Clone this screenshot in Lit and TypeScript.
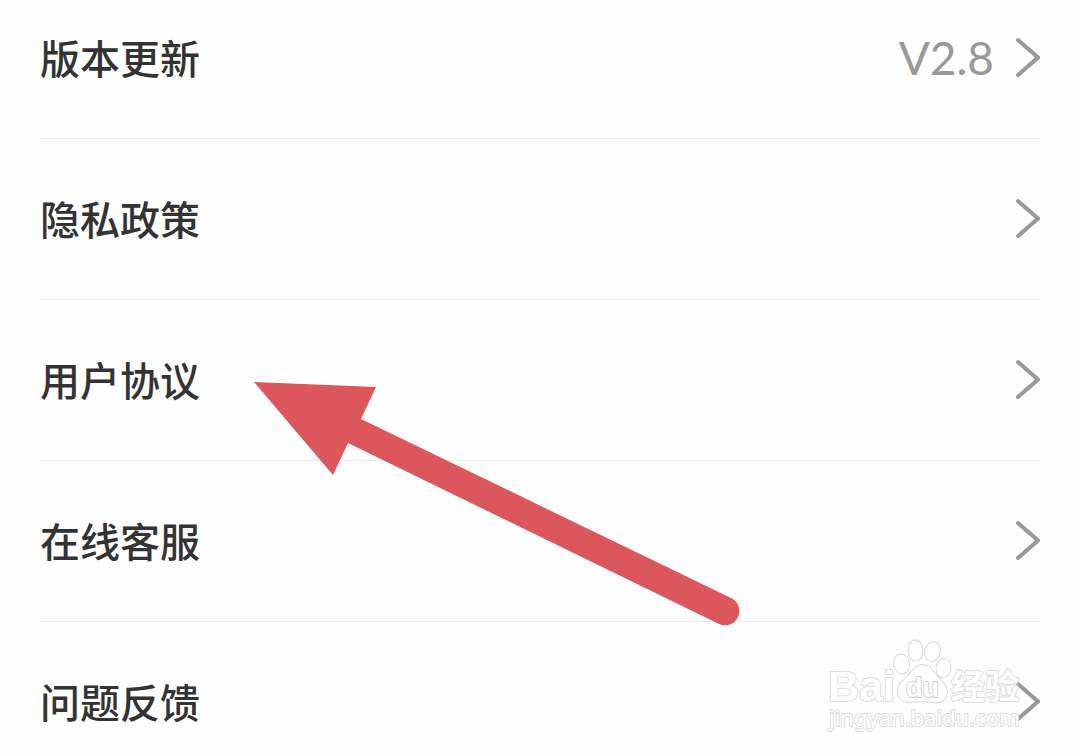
import { LitElement, html, css, svg, nothing } from "lit";
import { customElement, property } from "lit/decorators.js";

@customElement("settings-row")
class SettingsRow extends LitElement {
  @property() label = "";
  @property() value = "";

  static styles = css`
    :host {
      display: block;
      border-bottom: 1px solid #ebebeb;
    }
    .row {
      display: flex;
      align-items: center;
      justify-content: space-between;
      padding: 59px 0 61px;
      color: #333;
      text-decoration: none;
      font-size: 40px;
      line-height: 40px;
      font-weight: 500;
    }
    .end {
      display: flex;
      align-items: end;
      gap: 20px;
    }
    .value {
      font-family: Lato, "Noto Sans CJK SC", sans-serif;
      font-size: 46px;
      line-height: 38px;
      font-weight: 400;
      color: #999;
    }
    .chevron {
      display: block;
      width: 26px;
      height: 40px;
    }
  `;

  render() {
    return html`
      <a class="row" href="#">
        <span class="label">${this.label}</span>
        <span class="end">
          ${this.value ? html`<span class="value">${this.value}</span>` : nothing}
          <svg class="chevron" viewBox="0 0 26 40" aria-hidden="true">
            <path d="M4 3 L24 20.5 L4 38" fill="none" stroke="#999" stroke-width="4" stroke-linecap="round" stroke-linejoin="miter" />
          </svg>
        </span>
      </a>
    `;
  }
}

@customElement("app-root")
class AppRoot extends LitElement {
  static styles = css`
    :host {
      display: block;
      position: relative;
      height: 100vh;
      overflow: hidden;
      background: #fefefe;
      font-family: "Noto Sans CJK SC", sans-serif;
    }
    .list {
      padding: 0 40px;
      margin-top: -22px;
    }
    .arrow {
      position: absolute;
      left: 254px;
      top: 380px;
      width: 488px;
      height: 248px;
    }
    .watermark {
      position: absolute;
      right: 50px;
      bottom: 16px;
      width: 210px;
      height: 110px;
    }
    .mark {
      fill: #fff;
      stroke: #dcdcdc;
      stroke-width: 2px;
      stroke-linejoin: round;
      paint-order: stroke;
    }
    .paw {
      stroke: #d8d8d8;
    }
    .brand {
      font: bold 43px "Liberation Sans", sans-serif;
    }
    .du {
      font: bold 27px "Liberation Sans", sans-serif;
      stroke: #d0d0d0;
    }
    .han {
      font: bold 34px "Noto Sans CJK SC", sans-serif;
    }
    .site {
      font: 22px "Noto Sans", sans-serif;
    }
  `;

  private rows = [
    { label: "版本更新", value: "V2.8" },
    { label: "隐私政策", value: "" },
    { label: "用户协议", value: "" },
    { label: "在线客服", value: "" },
    { label: "问题反馈", value: "" },
  ];

  private toes = [
    { x: 81.5, y: 34, rx: 7.5, ry: 9.5, turn: -8 },
    { x: 95.5, y: 20.5, rx: 7, ry: 10, turn: -3 },
    { x: 112.5, y: 21.5, rx: 7.5, ry: 9.5, turn: 12 },
    { x: 123.5, y: 38, rx: 7, ry: 9, turn: 10 },
  ];

  render() {
    return html`
      <nav class="list">
        ${this.rows.map(
          (r) => html`<settings-row .label=${r.label} .value=${r.value}></settings-row>`
        )}
      </nav>
      <svg class="arrow" viewBox="254 380 488 248" aria-hidden="true">
        <path
          fill="#db575c"
          d="M254 382 L376 387 L361 419 L731 598 A14 14 0 0 1 719 624 L348 443 L333 475 Z"
        />
      </svg>
      <svg class="watermark" viewBox="0 0 210 110">
        <text class="mark brand" x="8" y="71">Bai</text>
        ${this.toes.map(
          (t) => svg`<ellipse class="mark paw" cx=${t.x} cy=${t.y} rx=${t.rx} ry=${t.ry}
            transform="rotate(${t.turn} ${t.x} ${t.y})" />`
        )}
        <path
          class="mark paw"
          d="M102 35 C94 35 91 44 85 49 C79 54 76 60 79 66 C83 75 93 71 102 71 C111 71 121 76 126 66 C129 60 125 54 120 49 C114 44 111 35 102 35 Z"
        />
        <text class="mark du" x="86" y="67">du</text>
        <text class="mark han" x="131" y="69">经验</text>
        <text class="mark site" x="9" y="96">jingyan.baidu.com</text>
      </svg>
    `;
  }
}
